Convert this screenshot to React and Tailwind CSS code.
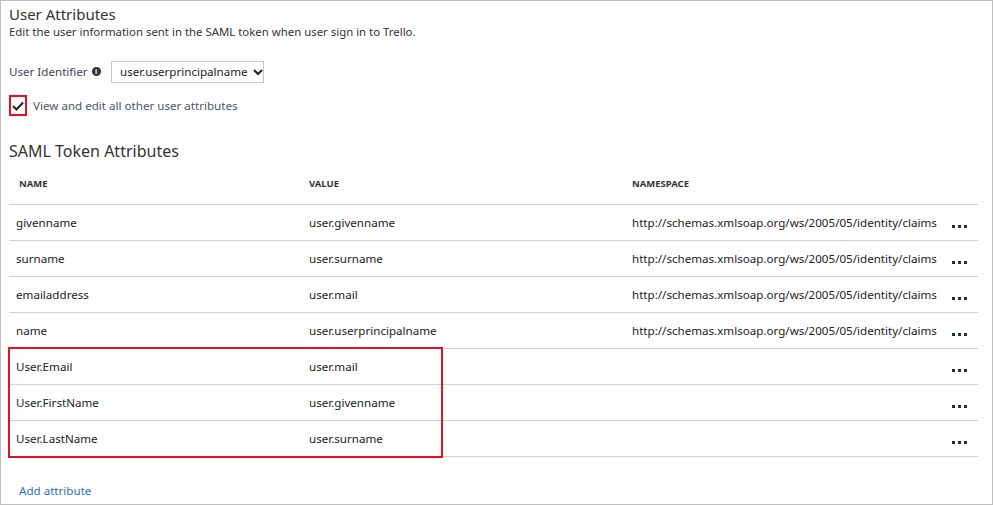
import React from 'react'

const rows = [
  { name: 'givenname', value: 'user.givenname', ns: 'http://schemas.xmlsoap.org/ws/2005/05/identity/claims' },
  { name: 'surname', value: 'user.surname', ns: 'http://schemas.xmlsoap.org/ws/2005/05/identity/claims' },
  { name: 'emailaddress', value: 'user.mail', ns: 'http://schemas.xmlsoap.org/ws/2005/05/identity/claims' },
  { name: 'name', value: 'user.userprincipalname', ns: 'http://schemas.xmlsoap.org/ws/2005/05/identity/claims' },
  { name: 'User.Email', value: 'user.mail', ns: '' },
  { name: 'User.FirstName', value: 'user.givenname', ns: '' },
  { name: 'User.LastName', value: 'user.surname', ns: '' },
]

function Dots() {
  return (
    <div className="flex gap-[3px] mt-[6px] ml-[1px]">
      <span className="w-[3px] h-[3px] bg-[#1f2a44]" />
      <span className="w-[3px] h-[3px] bg-[#1f2a44]" />
      <span className="w-[3px] h-[3px] bg-[#1f2a44]" />
    </div>
  )
}

export default function App() {
  return (
    <div
      className="w-[993px] h-[505px] border border-[#bfbfbf] bg-white text-[#222] overflow-hidden"
      style={{ fontFamily: '"Segoe UI", "Noto Sans", "Open Sans", sans-serif' }}
    >
      <div className="pl-[8px]">
        <h1 className="mt-[3px] text-[15px] leading-[20px] text-[#333]">User Attributes</h1>
        <p className="text-[11.4px] leading-[16px] text-[#333]">Edit the user information sent in the SAML token when user sign in to Trello.</p>

        <div className="mt-[21px] flex items-center h-[22px]">
          <div className="w-[102px] flex items-center">
            <span className="whitespace-nowrap text-[11.6px] text-[#45425a]">User Identifier</span>
            <span className="ml-[4px] w-[9px] h-[9px] rounded-full bg-[#333] text-white text-[7px] leading-[9px] font-bold flex items-center justify-center">i</span>
          </div>
          <div className="w-[153px] h-[22px] border border-[#c6c6c6] flex items-center pl-[8px] gap-[5px] text-[11.6px]">
            <span className="whitespace-nowrap">user.userprincipalname</span>
            <svg width="10" height="8" viewBox="0 0 10 8" fill="none" stroke="#222" strokeWidth="2.2">
              <path d="M1 2l4 4 4-4" />
            </svg>
          </div>
        </div>

        <div className="mt-[12px] flex items-center h-[21px]">
          <div className="w-[18px] h-[21px] border-2 border-[#e4121f] flex items-center justify-center">
            <svg width="12" height="10" viewBox="0 0 12 10" fill="none" stroke="#222" strokeWidth="2">
              <path d="M1 5l3.5 3.5L11 1.5" />
            </svg>
          </div>
          <span className="ml-[6px] text-[11.6px] text-[#4a5566]">View and edit all other user attributes</span>
        </div>

        <h2 className="mt-[24px] text-[16px] leading-[22px] text-[#333]">SAML Token Attributes</h2>

        <div className="relative w-[969px]">
          <div className="h-[43px] pt-[3px] border-b border-[#cfcfcf] flex items-center text-[9.5px] font-bold text-[#333] uppercase">
            <span className="w-[300px] pl-[10px]">Name</span>
            <span className="w-[323px]">Value</span>
            <span>Namespace</span>
          </div>
          {rows.map(r => (
            <div key={r.name} className="h-[36px] pt-[1px] border-b border-[#cfcfcf] flex items-center text-[11.6px]">
              <span className="w-[300px] pl-[7px]">{r.name}</span>
              <span className="w-[323px]">{r.value}</span>
              <span className="w-[319px] whitespace-nowrap">{r.ns}</span>
              <Dots />
            </div>
          ))}
          <div className="absolute left-[-1px] top-[185px] w-[435px] h-[111px] border-2 border-[#e4121f]" />
        </div>

        <div className="mt-[26px] pl-[10px] text-[11.6px] leading-[16px] text-[#2a72b5]">Add attribute</div>
      </div>
    </div>
  )
}
